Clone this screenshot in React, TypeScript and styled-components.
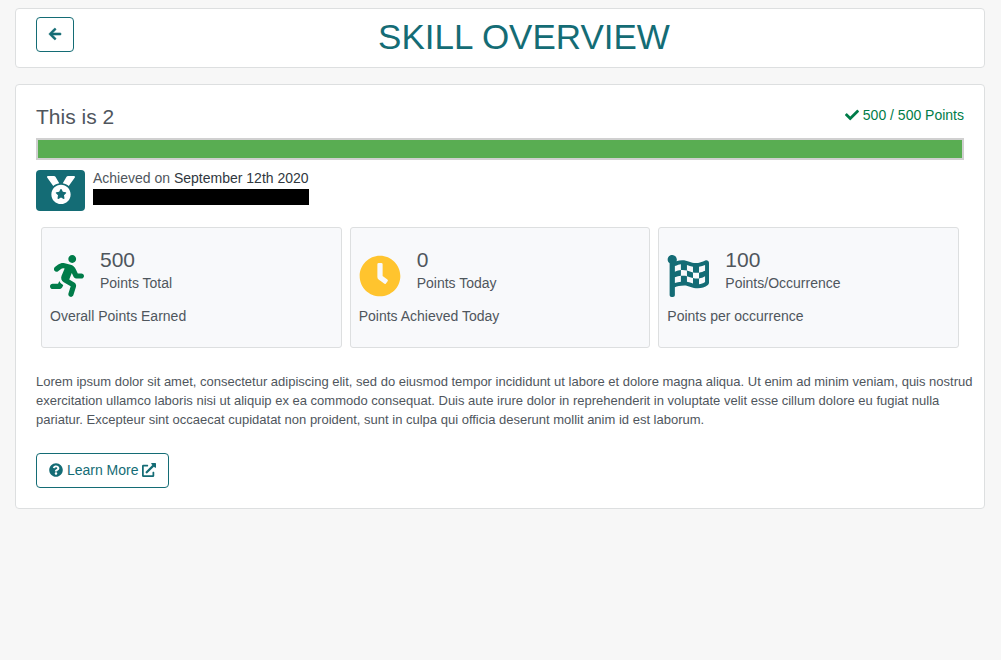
import React from "react";
import styled, { createGlobalStyle } from "styled-components";
import type { IconType } from "react-icons";
import {
  FaArrowLeft,
  FaCheck,
  FaClock,
  FaExternalLinkAlt,
  FaFlagCheckered,
  FaMedal,
  FaQuestionCircle,
  FaRunning,
} from "react-icons/fa";

const colors = {
  page: "#f7f7f7",
  teal: "#146c75",
  green: "#007c49",
  bar: "#59ad52",
  text: "#4f565d",
  strong: "#30373e",
  border: "#dddfe0",
};

const GlobalStyle = createGlobalStyle`
  *, *::before, *::after { box-sizing: border-box; }
  body {
    margin: 0;
    background: ${colors.page};
    color: ${colors.text};
    font-family: "Liberation Sans", Arial, sans-serif;
    font-size: 14px;
    line-height: 21px;
  }
  h1, h2, p { margin: 0; font-weight: 400; }
  svg {
    height: 1em;
    vertical-align: -0.125em;
    overflow: visible;
  }
`;

const Page = styled.main`
  display: flex;
  flex-direction: column;
  gap: 16px;
  padding: 8px 16px 8px 15px;
`;

const Card = styled.section`
  background: #fff;
  border: 1px solid ${colors.border};
  border-radius: 4px;
`;

const HeaderCard = styled(Card)`
  display: flex;
  align-items: flex-start;
  gap: 10px;
  padding: 8px 20px 10px;
`;

const BodyCard = styled(Card)`
  padding: 20px;
`;

const outline = `
  display: inline-block;
  padding: 6px 12px;
  border: 1px solid ${colors.teal};
  border-radius: 4px;
  background: #fff;
  color: ${colors.teal};
  font: inherit;
  line-height: 21px;
  text-decoration: none;
  cursor: pointer;
`;

const BackButton = styled.button`
  ${outline}

  svg {
    width: 12px;
    stroke-width: 20;
  }
`;

const LinkButton = styled.a`
  ${outline}
`;

const PageTitle = styled.h1`
  flex: 1;
  color: ${colors.teal};
  font-size: 35px;
  line-height: 40px;
  text-align: center;
  text-transform: uppercase;
`;

const SkillHeading = styled.div`
  display: flex;
  justify-content: space-between;
  align-items: flex-start;
`;

const SkillName = styled.h2`
  font-size: 21px;
  line-height: 23px;
`;

const PointsStatus = styled.div`
  color: ${colors.green};
`;

const ProgressTrack = styled.div`
  height: 22px;
  margin-top: 10px;
  border: 2px solid #d0d0d0;
`;

const ProgressFill = styled.div`
  height: 100%;
  background: ${colors.bar};
`;

const Achievement = styled.div`
  display: flex;
  align-items: flex-start;
  gap: 8px;
  margin-top: 8px;
`;

const MedalBadge = styled.div`
  width: 49px;
  height: 41px;
  margin-top: 2px;
  padding-top: 6px;
  border-radius: 4px;
  background: ${colors.teal};
  color: #fff;
  font-size: 28px;
  line-height: 28px;
  text-align: center;

  svg { vertical-align: top; }
`;

const AchievedDate = styled.span`
  color: ${colors.strong};
`;

const Redacted = styled.div`
  height: 16px;
  background: #000;
`;

const Stats = styled.div`
  display: grid;
  grid-template-columns: repeat(3, 1fr);
  gap: 8px;
  margin: 16px 5px 24px;
`;

const StatCard = styled.div`
  padding: 20px 8px;
  border: 1px solid ${colors.border};
  border-radius: 3px;
  background: #f8f9fb;
`;

const StatTop = styled.div`
  display: flex;
  align-items: flex-end;
  gap: 16px;
  margin-bottom: 9px;
`;

const StatIcon = styled.div<{ $color: string; $width: number }>`
  color: ${(p) => p.$color};
  font-size: 42px;
  line-height: 42px;

  svg {
    display: block;
    width: ${(p) => p.$width}px;
  }
`;

const StatFigures = styled.div`
  padding-bottom: 3px;
`;

const StatValue = styled.div`
  margin-bottom: 2px;
  font-size: 21px;
  line-height: 23px;
`;

const Description = styled.p`
  margin: 0 -12px 24px 0;
  font-size: 13px;
  line-height: 19px;
`;

interface Stat {
  icon: IconType;
  iconWidth: number;
  color: string;
  value: number;
  label: string;
  note: string;
}

const stats: Stat[] = [
  {
    icon: FaRunning,
    iconWidth: 34,
    color: colors.green,
    value: 500,
    label: "Points Total",
    note: "Overall Points Earned",
  },
  {
    icon: FaClock,
    iconWidth: 42,
    color: "#ffc42e",
    value: 0,
    label: "Points Today",
    note: "Points Achieved Today",
  },
  {
    icon: FaFlagCheckered,
    iconWidth: 42,
    color: colors.teal,
    value: 100,
    label: "Points/Occurrence",
    note: "Points per occurrence",
  },
];

export default function App() {
  return (
    <>
      <GlobalStyle />
      <Page>
        <HeaderCard>
          <BackButton type="button" aria-label="Back">
            <FaArrowLeft />
          </BackButton>
          <PageTitle>Skill Overview</PageTitle>
        </HeaderCard>
        <BodyCard>
          <SkillHeading>
            <SkillName>This is 2</SkillName>
            <PointsStatus>
              <FaCheck /> 500 / 500 Points
            </PointsStatus>
          </SkillHeading>
          <ProgressTrack
            role="progressbar"
            aria-label="Skill progress"
            aria-valuenow={500}
            aria-valuemin={0}
            aria-valuemax={500}
          >
            <ProgressFill />
          </ProgressTrack>
          <Achievement>
            <MedalBadge>
              <FaMedal />
            </MedalBadge>
            <div>
              <div>
                Achieved on <AchievedDate>September 12th 2020</AchievedDate>
              </div>
              <Redacted />
            </div>
          </Achievement>
          <Stats>
            {stats.map(({ icon: Icon, iconWidth, color, value, label, note }) => (
              <StatCard key={label}>
                <StatTop>
                  <StatIcon $color={color} $width={iconWidth}>
                    <Icon />
                  </StatIcon>
                  <StatFigures>
                    <StatValue>{value}</StatValue>
                    <div>{label}</div>
                  </StatFigures>
                </StatTop>
                <div>{note}</div>
              </StatCard>
            ))}
          </Stats>
          <Description>
            Lorem ipsum dolor sit amet, consectetur adipiscing elit, sed do eiusmod tempor incididunt ut labore et
            dolore magna aliqua. Ut enim ad minim veniam, quis nostrud exercitation ullamco laboris nisi ut aliquip ex
            ea commodo consequat. Duis aute irure dolor in reprehenderit in voluptate velit esse cillum dolore eu fugiat
            nulla pariatur. Excepteur sint occaecat cupidatat non proident, sunt in culpa qui officia deserunt mollit
            anim id est laborum.
          </Description>
          <LinkButton href="#learn-more">
            <FaQuestionCircle /> Learn More <FaExternalLinkAlt />
          </LinkButton>
        </BodyCard>
      </Page>
    </>
  );
}
